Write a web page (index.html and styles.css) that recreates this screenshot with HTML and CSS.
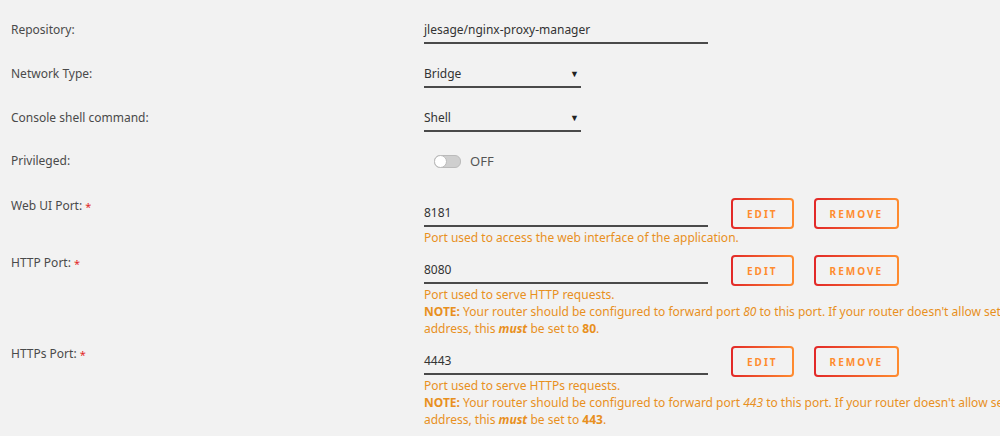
FILE: index.html
```html
<!DOCTYPE html>
<html lang="en">
<head>
    <meta charset="UTF-8">
    <meta name="viewport" content="width=device-width, initial-scale=1.0">
    <title>Update Container</title>
    <link rel="stylesheet" href="styles.css">
</head>
<body>
    <div class="form">
        <div class="row">
            <div class="label">Repository:</div>
            <div class="field">
                <div class="input wide">jlesage/nginx-proxy-manager</div>
            </div>
        </div>
        <div class="row">
            <div class="label">Network Type:</div>
            <div class="field">
                <div class="input select">Bridge <span class="caret">▼</span></div>
            </div>
        </div>
        <div class="row">
            <div class="label">Console shell command:</div>
            <div class="field">
                <div class="input select">Shell <span class="caret">▼</span></div>
            </div>
        </div>
        <div class="row switch-row">
            <div class="label">Privileged:</div>
            <div class="field">
                <span class="switch"><span class="knob"></span></span>
                <span class="switch-text">OFF</span>
            </div>
        </div>

        <div class="row port">
            <div class="label">Web UI Port: <span class="req">*</span></div>
            <div class="field">
                <div class="port-line">
                    <div class="input wide">8181</div>
                    <button class="btn">EDIT</button>
                    <button class="btn">REMOVE</button>
                </div>
                <div class="help">Port used to access the web interface of the application.</div>
            </div>
        </div>
        <div class="row port">
            <div class="label">HTTP Port: <span class="req">*</span></div>
            <div class="field">
                <div class="port-line">
                    <div class="input wide">8080</div>
                    <button class="btn">EDIT</button>
                    <button class="btn">REMOVE</button>
                </div>
                <div class="help">Port used to serve HTTP requests.<br>
                    <b>NOTE:</b> Your router should be configured to forward port <i>80</i> to this port. If your router doesn't allow setting the destination port of the public IP address, this <b><i>must</i></b> be set to <b>80</b>.</div>
            </div>
        </div>
        <div class="row port">
            <div class="label">HTTPs Port: <span class="req">*</span></div>
            <div class="field">
                <div class="port-line">
                    <div class="input wide">4443</div>
                    <button class="btn">EDIT</button>
                    <button class="btn">REMOVE</button>
                </div>
                <div class="help">Port used to serve HTTPs requests.<br>
                    <b>NOTE:</b> Your router should be configured to forward port <i>443</i> to this port. If your router doesn't allow setting the destination port of the public IP address, this <b><i>must</i></b> be set to <b>443</b>.</div>
            </div>
        </div>
    </div>
</body>
</html>
```

FILE: styles.css
```css
body {
    margin: 0;
    background: #f2f2f2;
    font-family: "Noto Sans", "Open Sans", sans-serif;
    font-size: 12px;
    color: #4a4a4a;
    overflow: hidden;
}
.form {
    padding: 18px 0 0 11px;
    width: 1400px;
}
.row {
    display: grid;
    grid-template-columns: 413px 1fr;
    margin-bottom: 18px;
}
.label {
    line-height: 24px;
}
.req {
    color: #e22828;
    font-size: 11px;
    vertical-align: top;
    line-height: 18px;
}
.input {
    height: 24px;
    line-height: 24px;
    border-bottom: 2px solid #4a4a4a;
    color: #333;
    box-sizing: content-box;
}
.wide {
    width: 284px;
}
.select {
    width: 157px;
    display: flex;
    justify-content: space-between;
}
.caret {
    font-size: 9px;
    color: #222;
    padding-right: 2px;
}
.switch-row {
    margin-bottom: 26px;
}
.switch-row .label {
    line-height: 22px;
}
.switch-row .field {
    display: flex;
    align-items: center;
    padding-left: 10px;
}
.switch {
    width: 25px;
    height: 11px;
    border-radius: 6px;
    background: #cfcfcf;
    border: 1px solid #bbb;
    position: relative;
    margin-right: 9px;
}
.knob {
    position: absolute;
    left: -1px;
    top: -1px;
    width: 13px;
    height: 13px;
    border-radius: 50%;
    background: #fff;
    border: 1px solid #bbb;
    box-sizing: border-box;
}
.switch-text {
    color: #555;
    font-size: 13px;
}
.row.port {
    margin-bottom: 9px;
}
.port .label {
    line-height: 16px;
}
.port-line {
    display: flex;
    align-items: center;
    gap: 20px;
}
.port-line .input {
    height: 25px;
    line-height: 25px;
    margin-right: 3px;
}
.btn {
    height: 31px;
    padding: 0 14px;
    border: 2px solid transparent;
    border-radius: 4px;
    background: linear-gradient(#f2f2f2, #f2f2f2) padding-box,
                linear-gradient(90deg, #e22828, #ff8c2f) border-box;
    color: #ff8c2f;
    font-family: inherit;
    font-size: 10px;
    font-weight: bold;
    letter-spacing: 2px;
}
.help {
    color: #e8901e;
    line-height: 17px;
    width: 840px;
}
.help b {
    font-weight: bold;
}
```
